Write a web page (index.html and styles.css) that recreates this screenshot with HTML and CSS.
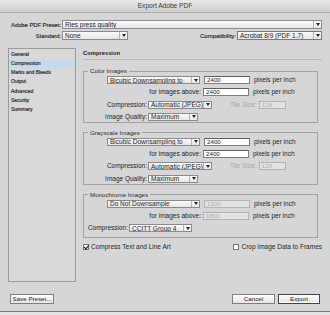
FILE: index.html
```html
<!DOCTYPE html>
<html lang="en">
<head>
  <meta charset="UTF-8">
  <title>Export Adobe PDF</title>
  <link rel="stylesheet" href="styles.css">
</head>
<body>
  <div class="window">
    <div class="titlebar">Export Adobe PDF</div>

    <div class="preset">
      <div class="prow">
        <span class="plabel">Adobe PDF Preset:</span>
        <div class="select grow"><span>Ries press quality</span><i></i></div>
      </div>
      <div class="prow">
        <span class="plabel">Standard:</span>
        <div class="select w-none"><span>None</span><i></i></div>
        <span class="compat">Compatibility:</span>
        <div class="select w-compat sel-focus"><span>Acrobat 8/9 (PDF 1.7)</span><i></i></div>
      </div>
    </div>

    <div class="main">
      <ul class="sidebar">
        <li>General</li>
        <li class="active">Compression</li>
        <li>Marks and Bleeds</li>
        <li>Output</li>
        <li>Advanced</li>
        <li>Security</li>
        <li>Summary</li>
      </ul>

      <div class="content">
        <div class="heading">Compression</div>

        <fieldset class="group">
          <legend>Color Images</legend>
          <div class="row">
            <div class="select w-sample"><span>Bicubic Downsampling to</span><i></i></div>
            <input class="field" value="2400">
            <span class="unit">pixels per inch</span>
          </div>
          <div class="row">
            <span class="lbl-wide">for images above:</span>
            <input class="field" value="2400">
            <span class="unit">pixels per inch</span>
          </div>
          <div class="row">
            <span class="lbl">Compression:</span>
            <div class="select w-comp"><span>Automatic (JPEG)</span><i></i></div>
            <span class="tile">Tile Size:</span>
            <input class="field small" value="128" disabled>
          </div>
          <div class="row">
            <span class="lbl">Image Quality:</span>
            <div class="select w-qual"><span>Maximum</span><i></i></div>
          </div>
        </fieldset>

        <fieldset class="group">
          <legend>Grayscale Images</legend>
          <div class="row">
            <div class="select w-sample"><span>Bicubic Downsampling to</span><i></i></div>
            <input class="field" value="2400">
            <span class="unit">pixels per inch</span>
          </div>
          <div class="row">
            <span class="lbl-wide">for images above:</span>
            <input class="field" value="2400">
            <span class="unit">pixels per inch</span>
          </div>
          <div class="row">
            <span class="lbl">Compression:</span>
            <div class="select w-comp"><span>Automatic (JPEG)</span><i></i></div>
            <span class="tile">Tile Size:</span>
            <input class="field small" value="128" disabled>
          </div>
          <div class="row">
            <span class="lbl">Image Quality:</span>
            <div class="select w-qual"><span>Maximum</span><i></i></div>
          </div>
        </fieldset>

        <fieldset class="group mono">
          <legend>Monochrome Images</legend>
          <div class="row">
            <div class="select w-sample"><span>Do Not Downsample</span><i></i></div>
            <input class="field" value="1200" disabled>
            <span class="unit">pixels per inch</span>
          </div>
          <div class="row">
            <span class="lbl-wide">for images above:</span>
            <input class="field" value="1800" disabled>
            <span class="unit">pixels per inch</span>
          </div>
          <div class="row">
            <span class="lbl-mono">Compression:</span>
            <div class="select w-ccitt"><span>CCITT Group 4</span><i></i></div>
          </div>
        </fieldset>

        <div class="checks">
          <label class="check"><span class="box on"></span>Compress Text and Line Art</label>
          <label class="check"><span class="box"></span>Crop Image Data to Frames</label>
        </div>
      </div>
    </div>

    <div class="footer">
      <button class="btn save">Save Preset...</button>
      <div class="actions">
        <button class="btn cancel">Cancel</button>
        <button class="btn export">Export</button>
      </div>
    </div>
  </div>
</body>
</html>
```

FILE: styles.css
```css
* { box-sizing: border-box; margin: 0; padding: 0; }
body {
  background: #e4e4e4;
  font-family: "Liberation Sans", Arial, sans-serif;
  font-size: 6.5px;
  line-height: 8px;
  color: #262626;
}
.window {
  width: 330px;
  height: 312px;
  background: #d6d6d6;
  border-bottom: 1px solid #7c7c7c;
  display: flex;
  flex-direction: column;
}
.titlebar {
  height: 13px;
  line-height: 12px;
  text-align: center;
  color: #3a3a3a;
  font-size: 6.6px;
  background: linear-gradient(#e9e9e9, #cfcfcf);
  border-bottom: 1px solid #acacac;
}

/* preset rows */
.preset {
  padding: 7px 8px 0 10px;
}
.prow {
  display: flex;
  align-items: center;
  height: 9px;
}
.prow + .prow { margin-top: 2px; }
.plabel {
  width: 51px;
  text-align: right;
  margin-right: 1px;
  white-space: nowrap;
  font-size: 5.8px;
  -webkit-text-stroke: 0.15px #262626;
}
.compat {
  margin-left: auto;
  margin-right: 1px;
  font-size: 6px;
  -webkit-text-stroke: 0.15px #262626;
}

/* popup menus */
.select {
  display: flex;
  align-items: center;
  height: 9px;
  background: linear-gradient(#fafafa, #e6e6e6);
  border: 1px solid #8a8a8a;
  white-space: nowrap;
  overflow: hidden;
}
.select span {
  flex: 1;
  padding-left: 2px;
  overflow: hidden;
  line-height: 7px;
}
.select i {
  width: 8px;
  height: 100%;
  border-left: 1px solid #b4b4b4;
  position: relative;
}
.select i::after {
  content: "";
  position: absolute;
  left: 2px;
  top: 2px;
  border-left: 2px solid transparent;
  border-right: 2px solid transparent;
  border-top: 3px solid #222;
}
.sel-focus { border-color: #5a7fb0; }
.grow { flex: 1; }
.w-none { width: 66px; }
.w-compat { width: 85px; }
.w-sample { width: 93px; margin-left: 23px; }
.w-comp { width: 64px; }
.w-qual { width: 50px; }
.w-ccitt { width: 63px; }
.row .select { height: 8px; }
.row .select i::after { top: 1.5px; }

/* main area */
.main {
  display: flex;
  margin-top: 8px;
  height: 234px;
}
.sidebar {
  list-style: none;
  width: 68px;
  margin-left: 8px;
  border: 1px solid #9c9c9c;
  background: #d9d9d9;
  padding-top: 0.5px;
  font-size: 5px;
  color: #333;
  -webkit-text-stroke: 0.2px #333;
}
.sidebar li {
  height: 9.3px;
  line-height: 9.3px;
  padding-left: 2px;
}
.sidebar li.active { background: #c6daee; }

.content {
  flex: 1;
  margin: 1px 8px 0 7px;
}
.heading {
  font-weight: bold;
  font-size: 5.8px;
  color: #222;
  padding-bottom: 2px;
  border-bottom: 1px solid #bababa;
}

.group {
  margin: 7px 4px 0 0;
  padding: 1px 0 1px 0;
  border: 1px solid #a3a3a3;
  min-width: 0;
  display: flex;
  flex-direction: column;
  gap: 4.3px;
}
.group + .group { margin-top: 6px; }
.group legend {
  margin-left: 4px;
  padding: 0 2px;
  font-size: 6.2px;
  line-height: 8px;
  color: #2a2a2a;
}
.group.mono { padding-bottom: 5px; }

.row {
  display: flex;
  align-items: center;
  height: 8px;
  white-space: nowrap;
}
.lbl, .lbl-wide, .lbl-mono {
  text-align: right;
  padding-right: 1px;
}
.lbl { width: 64px; }
.lbl-wide { width: 119px; padding-right: 2px; }
.lbl-mono { width: 45px; }
.field {
  width: 46px;
  height: 8px;
  margin-left: 4px;
  border: 1px solid #7d7d7d;
  border-top-color: #5e5e5e;
  background: #fff;
  font: inherit;
  font-size: 6.2px;
  padding-left: 2px;
  color: #1d1d1d;
}
.lbl-wide + .field { margin-left: 0; }
.field:disabled {
  background: #e2e2e2;
  border-color: #b3b3b3;
  color: #b0b0b0;
}
.field.small { width: 27px; margin-left: 2px; }
.unit { margin-left: 4px; }
.tile {
  margin-left: 18px;
  color: #a9a9a9;
}

.checks {
  display: flex;
  justify-content: space-between;
  margin-top: 5px;
  height: 8px;
}
.check {
  display: flex;
  align-items: center;
  white-space: nowrap;
}
.box {
  width: 6px;
  height: 6px;
  border: 1px solid #777;
  background: #fff;
  margin-right: 2px;
  position: relative;
}
.box.on::after {
  content: "";
  position: absolute;
  left: 1px;
  top: -1px;
  width: 2px;
  height: 4px;
  border-right: 1px solid #111;
  border-bottom: 1px solid #111;
  transform: rotate(40deg);
}

/* buttons */
.footer {
  display: flex;
  justify-content: space-between;
  padding: 12px 10px 0 10px;
}
.actions { display: flex; gap: 3px; }
.btn {
  height: 10px;
  font: inherit;
  font-size: 6.2px;
  line-height: 8px;
  color: #222;
  background: linear-gradient(#fdfdfd, #e4e4e4);
  border: 1px solid #7f7f7f;
}
.save { width: 44px; }
.cancel { width: 43px; }
.export { width: 42px; border: 1px solid #444; box-shadow: inset 0 0 0 1px #fff; }
```
